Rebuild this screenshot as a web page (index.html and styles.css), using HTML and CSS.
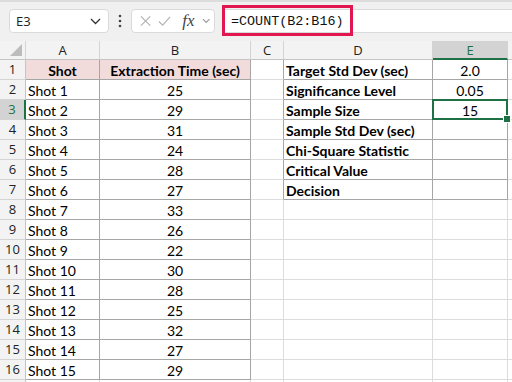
FILE: index.html
```html
<!DOCTYPE html>
<html>
	<head>
		<meta charset="UTF-8">
		<title>Chi-Square Test</title>
		<link rel="stylesheet" href="styles.css">
	</head>
	<body>
		<div class="toolbar">
			<div class="namebox">
				<span class="ref">E3</span>
				<svg class="chev" width="11" height="7" viewBox="0 0 11 7"><path d="M1 1l4.5 4.5L10 1" fill="none" stroke="#333" stroke-width="1.3"/></svg>
			</div>
			<div class="grip">
				<svg width="4" height="14" viewBox="0 0 4 14"><circle cx="2" cy="2" r="1.3" fill="#444"/><circle cx="2" cy="7" r="1.3" fill="#444"/><circle cx="2" cy="12" r="1.3" fill="#444"/></svg>
			</div>
			<div class="fxbox">
				<svg width="12" height="12" viewBox="0 0 12 12"><path d="M1 1l10 10M11 1L1 11" stroke="#b4b4b4" stroke-width="1.3"/></svg>
				<svg width="14" height="12" viewBox="0 0 14 12"><path d="M1 6.5l4 4L13 1.5" fill="none" stroke="#b4b4b4" stroke-width="1.3"/></svg>
				<span class="fx">fx</span>
				<svg width="9" height="6" viewBox="0 0 9 6"><path d="M1 1l3.5 3.5L8 1" fill="none" stroke="#999" stroke-width="1.2"/></svg>
			</div>
			<div class="formula">
				<span class="formula-text">=COUNT(B2:B16)</span>
				<div class="highlight"></div>
			</div>
		</div>

		<div class="sheet">
			<!-- header row -->
			<div class="cell hd corner"><svg width="12" height="12" viewBox="0 0 12 12"><polygon points="12,0 12,12 0,12" fill="#bcbcbc"/></svg></div>
			<div class="cell hd">A</div>
			<div class="cell hd">B</div>
			<div class="cell hd">C</div>
			<div class="cell hd">D</div>
			<div class="cell hd sel-col">E</div>
			<div class="cell hd"></div>

			<div class="cell rh">1</div>
			<div class="cell t pink b c">Shot</div>
			<div class="cell t pink b c">Extraction Time (sec)</div>
			<div class="cell tr"></div>
			<div class="cell t b">Target Std Dev (sec)</div>
			<div class="cell t c">2.0</div>
			<div class="cell"></div>

			<div class="cell rh">2</div>
			<div class="cell t">Shot 1</div>
			<div class="cell t c">25</div>
			<div class="cell tr"></div>
			<div class="cell t b">Significance Level</div>
			<div class="cell t c">0.05</div>
			<div class="cell"></div>

			<div class="cell rh sel-row">3</div>
			<div class="cell t">Shot 2</div>
			<div class="cell t c">29</div>
			<div class="cell tr"></div>
			<div class="cell t b">Sample Size</div>
			<div class="cell t c active">15</div>
			<div class="cell"></div>

			<div class="cell rh">4</div>
			<div class="cell t">Shot 3</div>
			<div class="cell t c">31</div>
			<div class="cell tr"></div>
			<div class="cell t b">Sample Std Dev (sec)</div>
			<div class="cell t c"></div>
			<div class="cell"></div>

			<div class="cell rh">5</div>
			<div class="cell t">Shot 4</div>
			<div class="cell t c">24</div>
			<div class="cell tr"></div>
			<div class="cell t b">Chi-Square Statistic</div>
			<div class="cell t c"></div>
			<div class="cell"></div>

			<div class="cell rh">6</div>
			<div class="cell t">Shot 5</div>
			<div class="cell t c">28</div>
			<div class="cell tr"></div>
			<div class="cell t b">Critical Value</div>
			<div class="cell t c"></div>
			<div class="cell"></div>

			<div class="cell rh">7</div>
			<div class="cell t">Shot 6</div>
			<div class="cell t c">27</div>
			<div class="cell tr"></div>
			<div class="cell t b">Decision</div>
			<div class="cell t c"></div>
			<div class="cell"></div>

			<div class="cell rh">8</div>
			<div class="cell t">Shot 7</div>
			<div class="cell t c">33</div>
			<div class="cell"></div><div class="cell"></div><div class="cell"></div><div class="cell"></div>

			<div class="cell rh">9</div>
			<div class="cell t">Shot 8</div>
			<div class="cell t c">26</div>
			<div class="cell"></div><div class="cell"></div><div class="cell"></div><div class="cell"></div>

			<div class="cell rh">10</div>
			<div class="cell t">Shot 9</div>
			<div class="cell t c">22</div>
			<div class="cell"></div><div class="cell"></div><div class="cell"></div><div class="cell"></div>

			<div class="cell rh">11</div>
			<div class="cell t">Shot 10</div>
			<div class="cell t c">30</div>
			<div class="cell"></div><div class="cell"></div><div class="cell"></div><div class="cell"></div>

			<div class="cell rh">12</div>
			<div class="cell t">Shot 11</div>
			<div class="cell t c">28</div>
			<div class="cell"></div><div class="cell"></div><div class="cell"></div><div class="cell"></div>

			<div class="cell rh">13</div>
			<div class="cell t">Shot 12</div>
			<div class="cell t c">25</div>
			<div class="cell"></div><div class="cell"></div><div class="cell"></div><div class="cell"></div>

			<div class="cell rh">14</div>
			<div class="cell t">Shot 13</div>
			<div class="cell t c">32</div>
			<div class="cell"></div><div class="cell"></div><div class="cell"></div><div class="cell"></div>

			<div class="cell rh">15</div>
			<div class="cell t">Shot 14</div>
			<div class="cell t c">27</div>
			<div class="cell"></div><div class="cell"></div><div class="cell"></div><div class="cell"></div>

			<div class="cell rh">16</div>
			<div class="cell t">Shot 15</div>
			<div class="cell t c">29</div>
			<div class="cell"></div><div class="cell"></div><div class="cell"></div><div class="cell"></div>

			<!-- row 17, only its top edge shows -->
			<div class="cell rh"></div>
			<div class="cell"></div><div class="cell"></div><div class="cell"></div><div class="cell"></div><div class="cell"></div><div class="cell"></div>
		</div>
	</body>
</html>
```

FILE: styles.css
```css
*{
	margin: 0;
	padding: 0;
	box-sizing: border-box;
}
html,body{
	width: 512px;
	height: 382px;
	overflow: hidden;
	background: #fff;
}
.toolbar{
	height: 41px;
	background: #f0f0f0;
	border-top: 2px solid #dcdcdc;
	display: flex;
	align-items: flex-start;
	padding: 7px 0 0 9px;
	font-family: "Open Sans", "Noto Sans", sans-serif;
}
.namebox{
	width: 100px;
	height: 24px;
	background: #fff;
	border: 1px solid #dadada;
	border-radius: 4px;
	display: flex;
	align-items: center;
	justify-content: space-between;
	padding: 0 7px 0 6px;
	font-size: 13px;
	color: #222;
}
.grip{
	width: 22px;
	height: 24px;
	display: flex;
	align-items: center;
	justify-content: center;
}
.fxbox{
	width: 84px;
	height: 24px;
	background: #fff;
	border: 1px solid #dadada;
	border-radius: 4px;
	display: flex;
	align-items: center;
	padding: 0 4px 0 8px;
	gap: 7px;
}
.fx{
	font-family: "Liberation Serif", "DejaVu Serif", serif;
	font-style: italic;
	font-size: 17px;
	color: #444;
	margin-left: 4px;
	line-height: 20px;
}
.formula{
	flex: 1;
	height: 24px;
	margin-left: 7px;
	background: #fff;
	border: 1px solid #dadada;
	border-right: none;
	border-radius: 4px 0 0 4px;
	position: relative;
	padding-left: 8px;
	display: flex;
	align-items: center;
}
.formula-text{
	font-family: "Liberation Mono", "DejaVu Sans Mono", monospace;
	font-size: 13.4px;
	color: #111;
}
.highlight{
	position: absolute;
	left: -1px;
	top: -5px;
	width: 131px;
	height: 31px;
	border: 3px solid #e3174f;
}

.sheet{
	display: grid;
	grid-template-columns: 26px 74px 151px 33px 149px 75px 1fr;
	grid-template-rows: 19px repeat(17, 20px);
	font-family: Lato, "Noto Sans", sans-serif;
	font-size: 14px;
	color: #000;
}
.cell{
	border-right: 1px solid #dcdcdc;
	border-bottom: 1px solid #dcdcdc;
	line-height: 19px;
	padding: 1px 2px 0 2px;
	white-space: nowrap;
	overflow: hidden;
}
.hd{
	background: #f3f3f3;
	border-right: 1px solid #d4d4d4;
	border-bottom: 1px solid #c4c4c4;
	font-family: "Open Sans", "Noto Sans", sans-serif;
	font-size: 13px;
	line-height: 18px;
	padding: 0;
	text-align: center;
	color: #222;
}
.corner{
	display: flex;
	align-items: flex-end;
	justify-content: flex-end;
	padding: 0 3px 3px 0;
}
.corner svg{
	display: block;
}
.rh{
	background: #f3f3f3;
	border-right: 1px solid #c4c4c4;
	border-bottom: 1px solid #d4d4d4;
	font-family: "Open Sans", "Noto Sans", sans-serif;
	font-size: 13px;
	text-align: center;
	padding: 0;
	color: #222;
}
.sel-col{
	background: #d3d3d3;
	border-bottom: 2px solid #1e7145;
	color: #1e7145;
}
.sel-row{
	background: #d3d3d3;
	border-right: 2px solid #1e7145;
	color: #1e7145;
}
.t{
	border-right-color: #a6a6a6;
	border-bottom-color: #a6a6a6;
}
.tr{
	border-right-color: #a6a6a6;
}
.pink{
	background: #f2dcdb;
}
.b{
	font-weight: bold;
}
.c{
	text-align: center;
}
.active{
	position: relative;
	overflow: visible;
}
.active::after{
	content: "";
	position: absolute;
	left: -1px;
	top: -1px;
	right: -1px;
	bottom: -1px;
	border: 2px solid #1e7145;
}
.active::before{
	content: "";
	position: absolute;
	right: -4px;
	bottom: -4px;
	width: 6px;
	height: 6px;
	background: #1e7145;
	border: 1px solid #fff;
	z-index: 1;
}
```
